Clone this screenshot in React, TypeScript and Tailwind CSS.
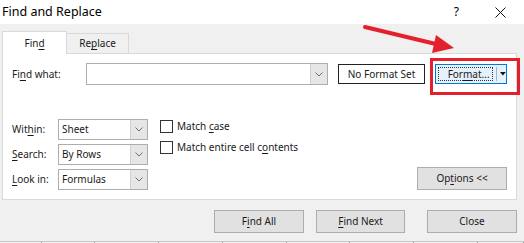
const U = ({ children }: { children: string }) => (
  <span className="underline underline-offset-[1.5px]">{children}</span>
);

const Chevron = () => (
  <svg width="8" height="5" viewBox="0 0 8 5">
    <polyline points="0.5,0.5 4,4 7.5,0.5" fill="none" stroke="#6d6d6d" strokeWidth="1" />
  </svg>
);

const Select = ({ value }: { value: string }) => (
  <div className="flex h-[21px] w-[90px] border border-[#adadad] bg-white">
    <div className="flex flex-1 items-center pl-[3px] text-[10px] text-[#1a1a1a]">{value}</div>
    <div className="flex w-[17px] items-center justify-center border-l border-[#d0d0d0] bg-[#e6e6e6]">
      <Chevron />
    </div>
  </div>
);

const Checkbox = ({ children }: { children: React.ReactNode }) => (
  <div className="flex items-center gap-[4px] text-[10px] text-[#1a1a1a]">
    <div className="h-[13px] w-[13px] border border-[#333] bg-white" />
    <span>{children}</span>
  </div>
);

const Button = ({ children, width }: { children: React.ReactNode; width: string }) => (
  <div
    className={`flex h-[23px] ${width} items-center justify-center border border-[#adadad] bg-[#e1e1e1] text-[10px] text-[#1a1a1a]`}
  >
    {children}
  </div>
);

const gridCells = [42, 53, 64, 64, 64, 63, 64, 64, 46];

export default function App() {
  return (
    <div
      className="relative flex h-[243px] w-[524px] flex-col overflow-hidden bg-[#f0f0f0]"
      style={{ fontFamily: '"Noto Sans", "Open Sans", sans-serif' }}
    >
      {/* Title bar */}
      <div className="flex h-[24px] items-center bg-white pl-[2px]">
        <span className="text-[12.5px] text-black">Find and Replace</span>
        <span className="ml-auto mr-[36px] text-[12px] text-black">?</span>
        <svg width="11" height="11" viewBox="0 0 11 11" className="mr-[18px]">
          <path d="M0.5 0.5 L10.5 10.5 M10.5 0.5 L0.5 10.5" stroke="#111" strokeWidth="1" />
        </svg>
      </div>

      {/* Tabs */}
      <div className="ml-[2px] mt-[7px] flex items-end">
        <div className="relative z-10 -mb-px flex h-[23px] w-[65px] items-center justify-center border border-b-0 border-[#d9d9d9] bg-white text-[10px] text-[#1a1a1a]">
          <span>Fin<U>d</U></span>
        </div>
        <div className="flex h-[20px] w-[62px] items-center justify-center border border-b-0 border-l-0 border-[#d9d9d9] bg-[#f0f0f0] text-[10px] text-[#1a1a1a]">
          <span>Re<U>p</U>lace</span>
        </div>
      </div>

      {/* Panel */}
      <div className="ml-[2px] flex h-[147px] w-[515px] flex-col border border-[#d9d9d9] bg-white px-[9px] pb-[9px] pt-[9px]">
        <div className="flex h-[22px] items-center">
          <span className="w-[74px] text-[10px] text-[#1a1a1a]">Fi<U>n</U>d what:</span>
          <div className="flex h-[22px] w-[242px] border border-[#adadad] bg-white">
            <div className="flex-1" />
            <div className="flex w-[17px] items-center justify-center border-l border-[#d0d0d0] bg-[#e6e6e6]">
              <Chevron />
            </div>
          </div>
          <div className="ml-[10px] flex h-[20px] w-[87px] items-center justify-center border border-[#222] bg-white text-[10px] text-[#1a1a1a]">
            No Format Set
          </div>
          <div className="ml-[10px] flex h-[20px] w-[72px] items-center border border-[#0078d7] bg-[#e5f1fb] text-[10px] text-[#1a1a1a]">
            <div className="ml-[2px] flex h-[14px] w-[57px] items-center justify-center border border-dotted border-[#333] pl-[6px]">
              <span>For<U>m</U>at...</span>
            </div>
            <div className="ml-[3px] h-[14px] w-px bg-[#a0b8cf]" />
            <svg width="6" height="4" viewBox="0 0 6 4" className="ml-[3px]">
              <polygon points="0,0 6,0 3,3.5" fill="#111" />
            </svg>
          </div>
        </div>

        <div className="mt-[34px] flex flex-1">
          <div className="flex flex-col gap-[4px]">
            {[
              { label: <span>Wit<U>h</U>in:</span>, value: "Sheet" },
              { label: <span><U>S</U>earch:</span>, value: "By Rows" },
              { label: <span><U>L</U>ook in:</span>, value: "Formulas" },
            ].map((row, i) => (
              <div key={i} className="flex items-center">
                <span className="w-[46px] text-[10px] text-[#1a1a1a]">{row.label}</span>
                <Select value={row.value} />
              </div>
            ))}
          </div>
          <div className="ml-[12px] flex flex-col gap-[6px]">
            <Checkbox>Match <U>c</U>ase</Checkbox>
            <Checkbox>Match entire cell c<U>o</U>ntents</Checkbox>
          </div>
          <div className="ml-auto flex items-end">
            <Button width="w-[90px]">
              <span>Op<U>t</U>ions &lt;&lt;</span>
            </Button>
          </div>
        </div>
      </div>

      {/* Bottom buttons */}
      <div className="mt-[10px] flex pl-[214px]">
        <Button width="w-[90px]">
          <span>F<U>i</U>nd All</span>
        </Button>
        <div className="ml-[12px]">
          <Button width="w-[89px]">
            <span><U>F</U>ind Next</span>
          </Button>
        </div>
        <div className="ml-[22px]">
          <Button width="w-[90px]">Close</Button>
        </div>
      </div>

      {/* Sheet grid behind the dialog */}
      <div className="mt-auto flex h-[2px] border-t border-[#c8c8c8]">
        {gridCells.map((w, i) => (
          <div key={i} className="h-full border-r border-[#9a9a9a]" style={{ width: w }} />
        ))}
      </div>

      {/* Red annotation */}
      <div className="pointer-events-none absolute left-[430px] top-[58px] h-[37px] w-[90px] border-[3px] border-[#e3202b]" />
      <svg className="pointer-events-none absolute left-0 top-0" width="524" height="243">
        <line x1="365" y1="27" x2="440" y2="45" stroke="#e3202b" strokeWidth="4" strokeLinecap="round" />
        <polygon points="454,48 436,35 432,53" fill="#e3202b" />
      </svg>
    </div>
  );
}
